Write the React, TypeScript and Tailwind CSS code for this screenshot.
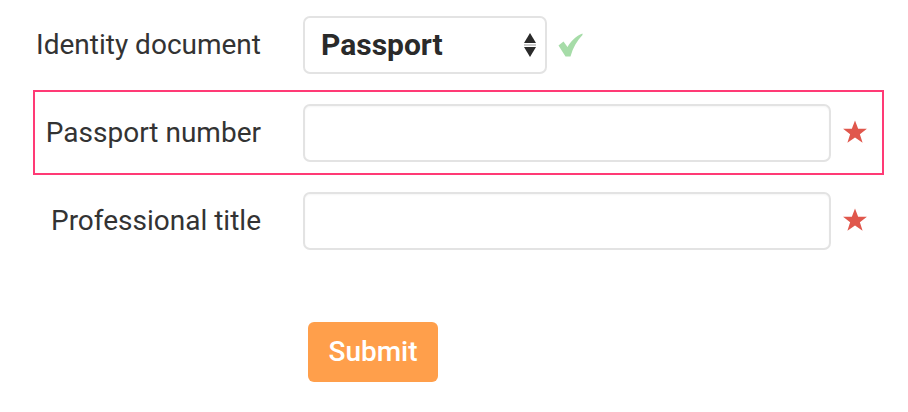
import React from "react";

function Star() {
  return (
    <svg width="26" height="25" viewBox="0 0 24 23" className="shrink-0">
      <path d="M12 0.5l2.9 7.6h8.1l-6.5 4.9 2.5 8-7-4.9-7 4.9 2.5-8L1 8.1h8.1z" fill="#e0574c" />
    </svg>
  );
}

function Row({ label, highlight, children }: { label: string; highlight?: boolean; children: React.ReactNode }) {
  return (
    <div
      className={`flex h-[85px] w-[851px] items-center border-2 ${highlight ? "border-[#ff3a75]" : "border-transparent"}`}
    >
      <div className="flex w-[226px] shrink-0 justify-end">
        <span className="whitespace-nowrap text-[28px] leading-none text-[#333333]">{label}</span>
      </div>
      <div className="ml-[42px] flex items-center">{children}</div>
    </div>
  );
}

export default function App() {
  return (
    <div
      className="h-[412px] w-[908px] bg-white pl-[33px] pt-[2px]"
      style={{ fontFamily: "Roboto, 'Noto Sans', sans-serif" }}
    >
      <div className="flex flex-col gap-[3px]">
        <Row label="Identity document">
          <div className="flex h-[58px] w-[244px] items-center justify-between rounded-[7px] border-2 border-[#e3e3e3] pl-[16px] pr-[8px]">
            <span className="text-[30px] font-bold leading-none text-[#2a2a2a]">Passport</span>
            <svg width="14" height="28" viewBox="0 0 14 28">
              <path d="M7 2 L13 12 L1 12 Z" fill="#2a2a2a" />
              <rect x="1" y="13.5" width="12" height="1" fill="#999" />
              <path d="M1 16 L13 16 L7 26 Z" fill="#2a2a2a" />
            </svg>
          </div>
          <svg width="25" height="24" viewBox="0 0 25 24" className="ml-[11px]">
            <path d="M0.5 12.5 L5.5 8.5 L9.5 14 C13 8 18 3 24.5 0.5 L24.5 2 C19 7.5 15 14.5 12.5 23.5 L7.5 23.5 Z" fill="#a6dca8" />
          </svg>
        </Row>
        <Row label="Passport number" highlight>
          <div className="h-[58px] w-[528px] rounded-[7px] border-2 border-[#e3e3e3] shadow-[inset_0_1px_2px_rgba(0,0,0,0.04)]" />
          <div className="ml-[11px]">
            <Star />
          </div>
        </Row>
        <Row label="Professional title">
          <div className="h-[58px] w-[528px] rounded-[7px] border-2 border-[#e3e3e3] shadow-[inset_0_1px_2px_rgba(0,0,0,0.04)]" />
          <div className="ml-[11px]">
            <Star />
          </div>
        </Row>
      </div>
      <button className="ml-[275px] mt-[59px] flex h-[60px] w-[130px] items-center justify-center rounded-[6px] bg-[#ff9f4b] text-[28px] font-medium leading-none text-white">
        Submit
      </button>
    </div>
  );
}
